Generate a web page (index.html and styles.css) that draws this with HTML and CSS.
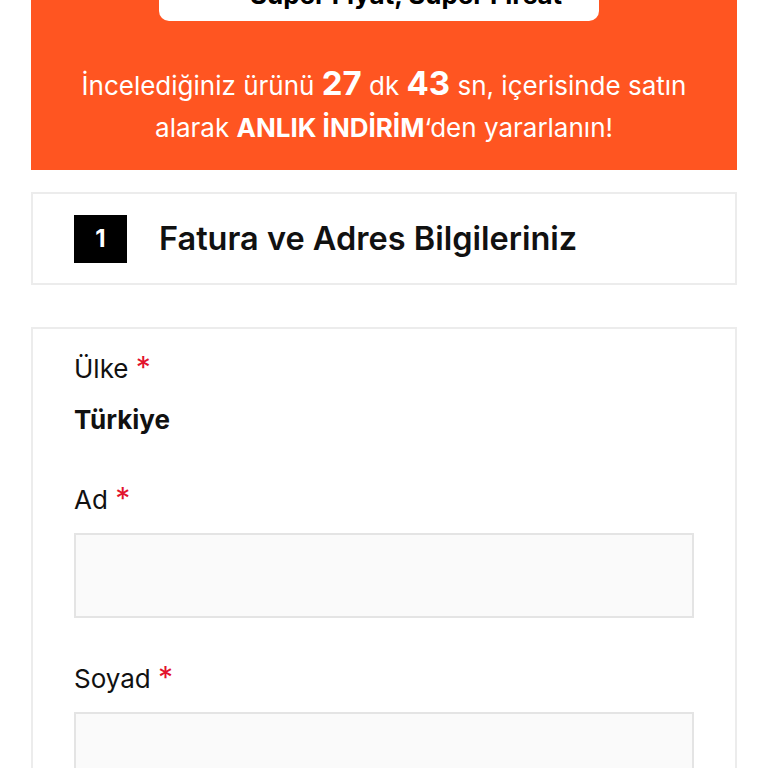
FILE: index.html
```html
<!DOCTYPE html>
<html lang="tr">
<head>
<meta charset="utf-8">
<title>Fatura ve Adres Bilgileriniz</title>
<link rel="stylesheet" href="styles.css">
</head>
<body>
<div class="page">
  <section class="banner">
    <div class="pill">
      <span class="pill-text">Süper Fiyat, Süper Fırsat</span>
    </div>
    <p class="banner-text">İncelediğiniz ürünü <b class="num">27</b> dk <b class="num">43</b> sn, içerisinde satın alarak <b>ANLIK İNDİRİM</b>‘den yararlanın!</p>
  </section>

  <section class="card step">
    <span class="badge">1</span>
    <h2 class="step-title">Fatura ve Adres Bilgileriniz</h2>
  </section>

  <section class="card form">
    <div class="field">
      <label class="label">Ülke <span class="req">*</span></label>
      <div class="value">Türkiye</div>
    </div>
    <div class="field">
      <label class="label">Ad <span class="req">*</span></label>
      <input class="input" type="text">
    </div>
    <div class="field">
      <label class="label">Soyad <span class="req">*</span></label>
      <input class="input" type="text">
    </div>
  </section>
</div>
</body>
</html>
```
FILE: styles.css
```css
* { box-sizing: border-box; }
html, body { margin: 0; padding: 0; background: #fff; }
body {
  font-family: Inter, "Noto Sans", "Liberation Sans", sans-serif;
  color: #111;
}
.page {
  margin: -51px 31px 0;
  display: flex;
  flex-direction: column;
}
.banner {
  background: #ff5521;
  padding: 20px 0 21px;
  display: flex;
  flex-direction: column;
  align-items: center;
}
.pill {
  width: 440px;
  height: 52px;
  margin-left: -10px;
  background: #fff;
  border-radius: 10px;
  display: flex;
  align-items: center;
  padding-left: 91px;
}
.pill-text {
  font-size: 26px;
  font-weight: 700;
  color: #000;
  line-height: 52px;
  white-space: nowrap;
}
.banner-text {
  margin: 44px 0 0;
  color: #fff;
  text-align: center;
  font-size: 26px;
  line-height: 42px;
  padding: 0 30px;
}
.banner-text b { font-weight: 700; }
.banner-text .num { font-size: 33px; line-height: 1; }
.card {
  background: #fff;
  border: 2px solid #ececec;
}
.step {
  margin-top: 22px;
  height: 93px;
  display: flex;
  align-items: center;
  padding-left: 41px;
  gap: 32px;
}
.badge {
  width: 53px;
  height: 48px;
  background: #000;
  color: #fff;
  font-weight: 700;
  font-size: 24px;
  display: flex;
  align-items: center;
  justify-content: center;
}
.step-title {
  margin: 0;
  font-size: 32.5px;
  font-weight: 600;
  color: #111;
}
.form {
  margin-top: 42px;
  padding: 23px 41px 40px;
  display: flex;
  flex-direction: column;
  gap: 44px;
}
.field {
  display: flex;
  flex-direction: column;
}
.label {
  font-size: 26px;
  line-height: 34px;
  color: #111;
}
.req {
  color: #e2132d;
  font-size: 30px;
  line-height: 1;
}
.value {
  margin-top: 19px;
  margin-bottom: 4px;
  font-size: 26px;
  font-weight: 700;
  line-height: 30px;
}
.input {
  margin-top: 16px;
  height: 85px;
  width: 100%;
  background: #fafafa;
  border: 2px solid #e4e4e4;
  border-radius: 0;
  font: inherit;
}
```
